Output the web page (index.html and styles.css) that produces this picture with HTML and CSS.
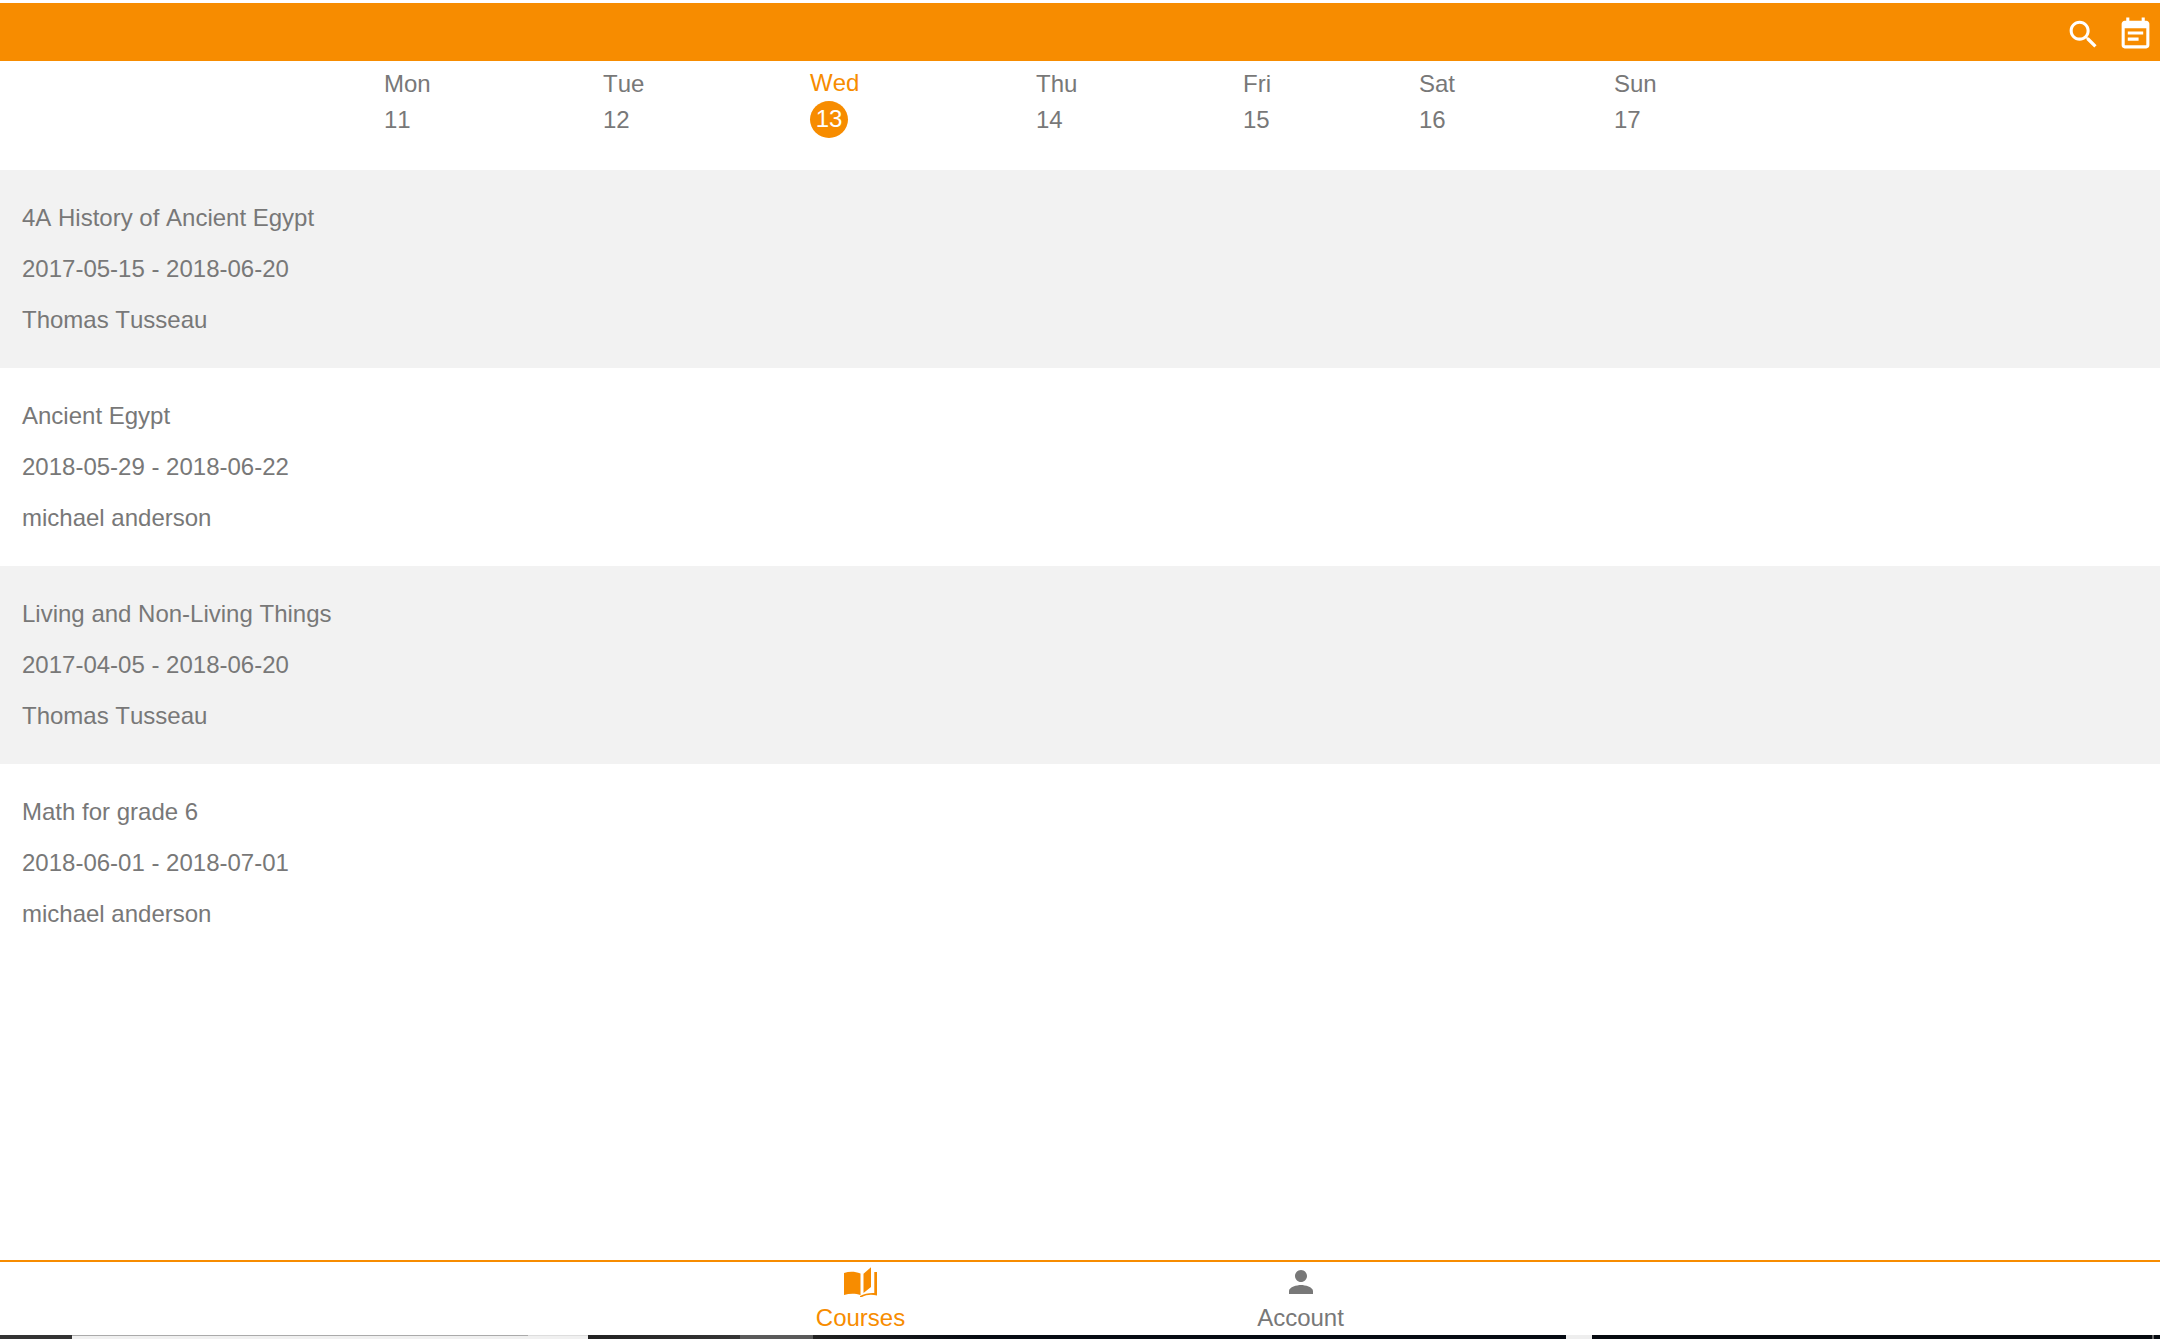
FILE: index.html
```html
<!DOCTYPE html>
<html lang="en">
<head>
<meta charset="utf-8">
<title>Courses</title>
<link rel="stylesheet" href="styles.css">
</head>
<body>
<div class="app">
  <header class="topbar">
    <svg class="top-icon" viewBox="0 0 24 24"><path d="M15.5 14h-.79l-.28-.27C15.41 12.59 16 11.11 16 9.5 16 5.91 13.09 3 9.5 3S3 5.91 3 9.5 5.91 16 9.5 16c1.61 0 3.09-.59 4.23-1.57l.27.28v.79l5 4.99L20.49 19l-4.99-5zm-6 0C7.01 14 5 11.99 5 9.5S7.01 5 9.5 5 14 7.01 14 9.5 11.99 14 9.5 14z"/></svg>
    <svg class="top-icon" viewBox="0 0 24 24"><path d="M17 10H7v2h10v-2zm2-7h-1V1h-2v2H8V1H6v2H5c-1.11 0-1.99.9-1.99 2L3 19c0 1.1.89 2 2 2h14c1.1 0 2-.9 2-2V5c0-1.1-.9-2-2-2zm0 16H5V8h14v11zm-5-5H7v2h7v-2z"/></svg>
  </header>
  <section class="week">
    <div class="day"><span class="day-name">Mon</span><span class="day-num">11</span></div>
    <div class="day"><span class="day-name">Tue</span><span class="day-num">12</span></div>
    <div class="day today"><span class="day-name">Wed</span><span class="day-num">13</span></div>
    <div class="day"><span class="day-name">Thu</span><span class="day-num">14</span></div>
    <div class="day"><span class="day-name">Fri</span><span class="day-num">15</span></div>
    <div class="day"><span class="day-name">Sat</span><span class="day-num">16</span></div>
    <div class="day"><span class="day-name">Sun</span><span class="day-num">17</span></div>
  </section>
  <main class="courses">
    <article class="course"><p>4A History of Ancient Egypt</p><p>2017-05-15 - 2018-06-20</p><p>Thomas Tusseau</p></article>
    <article class="course"><p>Ancient Egypt</p><p>2018-05-29 - 2018-06-22</p><p>michael anderson</p></article>
    <article class="course"><p>Living and Non-Living Things</p><p>2017-04-05 - 2018-06-20</p><p>Thomas Tusseau</p></article>
    <article class="course"><p>Math for grade 6</p><p>2018-06-01 - 2018-07-01</p><p>michael anderson</p></article>
  </main>
  <nav class="tabs">
    <div class="tab active">
      <svg class="tab-icon" viewBox="0 0 36 36"><path d="M1 9c5.500-2 11-1.800 16.500.5V31c-5-1.800-11-1.800-16.500 0z"/><path d="M20.500 9.700 28 3.300V23l-7.500 6z"/><path d="M31.300 8H34v23.500c-5-1.300-10.500-1.200-15 1.500h-2v-1c4-2.300 9.500-3.300 14.300-3z"/></svg>
      <span>Courses</span>
    </div>
    <div class="tab">
      <svg class="tab-icon" viewBox="0 0 24 24"><path d="M12 12c2.210 0 4-1.790 4-4s-1.790-4-4-4-4 1.790-4 4 1.790 4 4 4zm0 2c-2.670 0-8 1.340-8 4v2h16v-2c0-2.660-5.330-4-8-4z"/></svg>
      <span>Account</span>
    </div>
  </nav>
  <div class="strip">
    <i class="seg s1"></i><i class="seg s2"></i><i class="seg s3"></i><i class="seg s4"></i><i class="seg s5"></i><i class="seg s6"></i><i class="seg s7"></i><i class="seg s8"></i><i class="seg s9"></i>
  </div>
</div>
</body>
</html>
```
FILE: styles.css
```css
* { box-sizing: border-box; }
html, body { margin: 0; height: 100%; }
body { background: #fff; font-family: "Liberation Sans", Arial, sans-serif; font-kerning: none; color: #787878; font-size: 24px; }
.app { height: 1339px; display: flex; flex-direction: column; padding-top: 3px; overflow: hidden; }
.topbar { height: 58px; background: #f78c00; display: flex; justify-content: flex-end; gap: 15px; padding: 13px 6px 0 0; flex: none; }
.top-icon { width: 37px; height: 37px; fill: #fff; }
.week { height: 109px; flex: none; display: grid; grid-template-columns: 219px 207px 226px 207px 176px 195px 100px; padding: 6px 0 0 384px; }
.day { display: flex; flex-direction: column; align-items: flex-start; }
.day-name { height: 35px; line-height: 34px; }
.day-num { line-height: 36px; }
.today { color: #f78c00; }
.today .day-name { line-height: 32px; }
.today .day-num { width: 38px; height: 37px; border-radius: 50%; background: #f78c00; color: #fff; text-align: center; margin-top: -1px; }
.courses { flex: 1; }
.course { height: 198px; padding: 22px; }
.course:nth-child(odd) { background: #f2f2f2; }
.course p { margin: 0; height: 51px; line-height: 51px; }
.tabs { height: 75px; flex: none; border-top: 2px solid #f78c00; display: flex; justify-content: center; padding-left: 1px; }
.tab { width: 440px; display: flex; flex-direction: column; align-items: center; }
.tab-icon { width: 36px; height: 36px; margin-top: 2px; fill: currentColor; display: block; flex: none; }
.tab span { line-height: 34px; margin-top: 1px; }
.tab.active { color: #f78c00; }
.strip { height: 4px; flex: none; display: flex; }
.seg { display: block; height: 100%; }
.s1 { width: 72px; background: #333; }
.s2 { width: 516px; background: linear-gradient(90deg, #aaa 456px, #ddd 456px) top / 100% 1px no-repeat, #f0f0f0; }
.s3 { width: 152px; background: linear-gradient(90deg, #222, #353535); }
.s4 { width: 73px; background: #5a5a5a; }
.s5 { width: 753px; background: linear-gradient(90deg, #222, #060b12 22%); }
.s6 { width: 26px; background: #eee; }
.s7 { width: 560px; background: #060a10; }
.s8 { width: 2px; background: #666; }
.s9 { flex: 1; background: #060a10; }
```
